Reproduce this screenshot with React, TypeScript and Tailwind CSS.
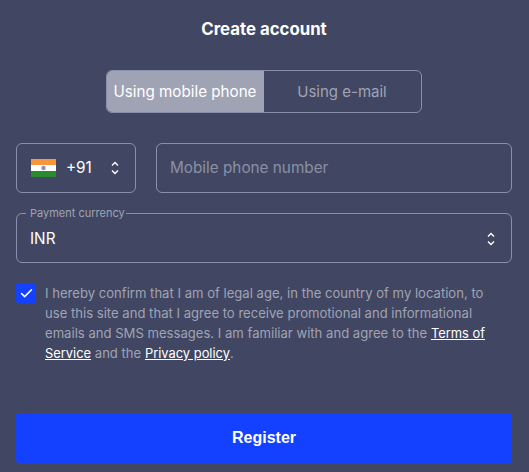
import { Check } from "lucide-react";

function UpDown({ className = "" }: { className?: string }) {
  return (
    <svg width="8" height="14" viewBox="0 0 8 14" fill="none" stroke="#fff" strokeWidth="1.4" className={className}>
      <path d="M1 4.6 4 1.6l3 3" />
      <path d="M1 9.4l3 3 3-3" />
    </svg>
  );
}

function IndiaFlag() {
  return (
    <svg width="25" height="18" viewBox="0 0 25 18" className="shrink-0">
      <rect width="25" height="6" fill="#f7953a" />
      <rect y="6" width="25" height="6" fill="#ffffff" />
      <rect y="12" width="25" height="6" fill="#2a8a2e" />
      <circle cx="12.5" cy="9" r="2.2" fill="#8a8fc0" />
    </svg>
  );
}

export default function App() {
  return (
    <div className="w-[529px] h-[472px] overflow-hidden bg-[#414762] pl-4 pr-[17px] font-['Inter',sans-serif]">
      <h1 className="pt-[17px] text-center text-[16.8px] leading-6 font-bold text-white">Create account</h1>

      {/* Tabs */}
      <div className="mt-[29px] mx-auto flex h-[43px] w-[316px] rounded-md border border-[#8a8fae] overflow-hidden">
        <div className="-m-px flex w-[158px] items-center justify-center bg-[#a0a3b4] pt-px text-[15.2px] text-white">
          Using mobile phone
        </div>
        <div className="flex flex-1 items-center justify-center pt-px text-[15px] text-[#a0a3b4]">Using e-mail</div>
      </div>

      {/* Phone */}
      <div className="mt-[30px] flex gap-5">
        <div className="flex h-[50px] w-[120px] items-center rounded-md border border-[#8a8fae] pl-[14px]">
          <IndiaFlag />
          <span className="ml-[10px] pt-px text-[15.3px] text-white">+91</span>
          <UpDown className="ml-[19px]" />
        </div>
        <div className="flex h-[50px] flex-1 items-center rounded-md border border-[#8a8fae] px-[13px] pt-px text-[15.3px] text-[#8b8fa5]">
          Mobile phone number
        </div>
      </div>

      {/* Currency */}
      <fieldset className="mt-[14px] h-[56px] rounded-md border border-[#8a8fae] pl-[9px] pr-[16px]">
        <legend className="pl-[4px] pr-px text-[11px] leading-[12px] text-[#a0a3b4]">Payment currency</legend>
        <div className="mt-[2px] flex h-[36px] items-center justify-between pl-[4px]">
          <span className="text-[15.3px] text-white">INR</span>
          <UpDown />
        </div>
      </fieldset>

      {/* Agreement */}
      <div className="mt-5 flex gap-[9px]">
        <div className="flex size-5 shrink-0 items-center justify-center rounded-[2px] bg-[#1440ff]">
          <Check size={15} color="#fff" strokeWidth={2.5} />
        </div>
        <p className="pr-4 text-[13.1px] leading-5 text-[#a0a3b4]">
          I hereby confirm that I am of legal age, in the country of my location, to use this site and that I agree to
          receive promotional and informational emails and SMS messages. I am familiar with and agree to the{" "}
          <a className="text-[12.9px] leading-none text-white underline">Terms of Service</a> and the{" "}
          <a className="text-[12.9px] leading-none text-white underline">Privacy policy</a>.
        </p>
      </div>

      <button className="mt-[50px] h-[50px] w-full rounded-[3px] bg-[#1440ff] font-['Liberation_Sans',sans-serif] text-base font-bold text-white">
        Register
      </button>
    </div>
  );
}
